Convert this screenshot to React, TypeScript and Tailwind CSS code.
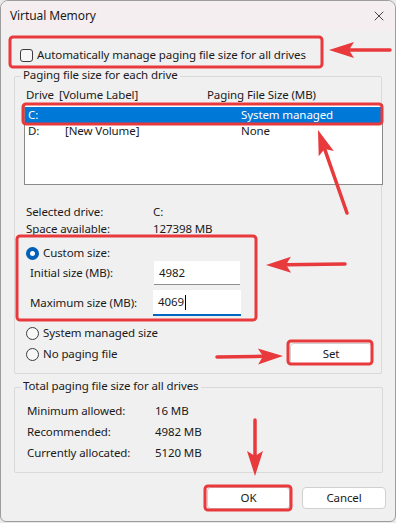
import { X } from 'lucide-react'

const RED = '#e8393c'

function Arrow({ x1, y1, x2, y2 }: { x1: number; y1: number; x2: number; y2: number }) {
  const dx = x2 - x1
  const dy = y2 - y1
  const len = Math.hypot(dx, dy)
  const ux = dx / len
  const uy = dy / len
  const px = -uy
  const py = ux
  const L = 25
  const W = 8
  const notch = 5
  const bx = x2 - ux * L
  const by = y2 - uy * L
  const nx = x2 - ux * (L - notch)
  const ny = y2 - uy * (L - notch)
  const pts = [
    [x2, y2],
    [bx + px * W, by + py * W],
    [nx, ny],
    [bx - px * W, by - py * W],
  ]
    .map((p) => p.join(','))
    .join(' ')
  return (
    <g>
      <line x1={x1} y1={y1} x2={nx} y2={ny} stroke={RED} strokeWidth={3.5} strokeLinecap="round" />
      <polygon points={pts} fill={RED} />
    </g>
  )
}

function Box({ x, y, w, h }: { x: number; y: number; w: number; h: number }) {
  return <rect x={x} y={y} width={w} height={h} rx={3} fill="none" stroke={RED} strokeWidth={3} />
}

function Radio({ checked }: { checked?: boolean }) {
  return checked ? (
    <span className="flex h-[13px] w-[13px] items-center justify-center rounded-full bg-[#005fb8]">
      <span className="h-[5px] w-[5px] rounded-full bg-white" />
    </span>
  ) : (
    <span className="h-[13px] w-[13px] rounded-full border border-[#3c3c3c] bg-[#f7f7f7]" />
  )
}

export default function App() {
  return (
    <div className="relative h-[523px] w-[396px] overflow-hidden bg-[#e9e9e9] font-['Noto_Sans',sans-serif] text-[11.5px] leading-none tracking-[-0.1px] text-[#1a1a1a]">
      {/* Window */}
      <div className="flex h-[522px] w-[396px] flex-col overflow-hidden rounded-t-[8px] rounded-b-[6px] border border-[#9d9d9d] bg-[#f0f0f0]">
        {/* Title bar */}
        <div className="flex h-[30px] items-center justify-between bg-[#f5eef1] pl-[9px] pr-[8px]">
          <span className="text-[12px]">Virtual Memory</span>
          <X size={16} strokeWidth={1.2} className="text-[#1a1a1a]" />
        </div>

        {/* Auto manage */}
        <div className="mt-[16px] flex h-[16px] items-center gap-[4px] pl-[19px]">
          <span className="h-[13px] w-[13px] rounded-[3px] border border-[#3c3c3c] bg-[#f7f7f7]" />
          <span>Automatically manage paging file size for all drives</span>
        </div>

        {/* Paging file size for each drive */}
        <div className="relative ml-[13px] mt-[13px] h-[298px] w-[368px] rounded-[2px] border border-[#d9d9d9]">
          <span className="absolute -top-[8px] left-[6px] bg-[#f0f0f0] px-[2px]">Paging file size for each drive</span>

          <div className="mt-[10px] flex h-[16px] items-center pl-[11px]">
            <span className="w-[33px]">Drive</span>
            <span className="w-[148px]">[Volume Label]</span>
            <span>Paging File Size (MB)</span>
          </div>

          <div className="ml-[9px] mt-[1px] h-[81px] w-[359px] border border-[#8a8a8a] bg-white pt-[2px]">
            <div className="flex h-[16px] items-center bg-[#0078d7] pl-[3px] text-white">
              <span className="w-[213px]">C:</span>
              <span>System managed</span>
            </div>
            <div className="flex h-[16px] items-center pl-[3px]">
              <span className="w-[37px]">D:</span>
              <span className="w-[176px]">[New Volume]</span>
              <span>None</span>
            </div>
          </div>

          <div className="mt-[18px] pl-[11px]">
            <div className="flex h-[17px] items-center">
              <span className="w-[127px]">Selected drive:</span>
              <span>C:</span>
            </div>
            <div className="flex h-[17px] items-center">
              <span className="w-[127px]">Space available:</span>
              <span>127398 MB</span>
            </div>
          </div>

          <div className="mt-[8px] flex h-[16px] items-center gap-[4px] pl-[11px]">
            <Radio checked />
            <span>Custom size:</span>
          </div>

          <div className="flex h-[24px] items-center pl-[15px]">
            <span className="w-[124px]">Initial size (MB):</span>
            <div className="flex h-[24px] w-[86px] items-center border-b border-[#8f8f8f] bg-white pl-[5px]">4982</div>
          </div>

          <div className="mt-[5px] flex h-[26px] items-center pl-[15px]">
            <span className="w-[123px]">Maximum size (MB):</span>
            <div className="flex h-[26px] w-[88px] items-center border-b-2 border-[#0067c0] bg-white pl-[5px]">
              4069
              <span className="ml-[1px] h-[15px] w-[1px] bg-black" />
            </div>
          </div>

          <div className="mt-[9px] flex h-[16px] items-center gap-[4px] pl-[11px]">
            <Radio />
            <span>System managed size</span>
          </div>

          <div className="mt-[2px] flex h-[22px] items-center justify-between pl-[11px] pr-[9px]">
            <div className="flex items-center gap-[4px]">
              <Radio />
              <span>No paging file</span>
            </div>
            <button className="flex h-[22px] w-[82px] items-center justify-center rounded-[4px] border border-[#d0d0d0] bg-white">
              Set
            </button>
          </div>
        </div>

        {/* Total paging file size */}
        <div className="relative ml-[13px] mt-[13px] h-[86px] w-[369px] rounded-[2px] border border-[#d9d9d9]">
          <span className="absolute -top-[8px] left-[6px] bg-[#f0f0f0] px-[2px]">Total paging file size for all drives</span>
          <div className="mt-[12px] pl-[12px]">
            {[
              ['Minimum allowed:', '16 MB'],
              ['Recommended:', '4982 MB'],
              ['Currently allocated:', '5120 MB'],
            ].map(([label, value]) => (
              <div key={label} className="flex h-[21px] items-center">
                <span className="w-[128px]">{label}</span>
                <span>{value}</span>
              </div>
            ))}
          </div>
        </div>

        {/* Buttons */}
        <div className="mt-[14px] flex justify-end gap-[12px] pr-[9px]">
          <button className="flex h-[22px] w-[83px] items-center justify-center rounded-[4px] border border-[#d0d0d0] bg-white">
            OK
          </button>
          <button className="flex h-[22px] w-[84px] items-center justify-center rounded-[4px] border border-[#d0d0d0] bg-white">
            Cancel
          </button>
        </div>
      </div>

      {/* Annotations */}
      <svg className="pointer-events-none absolute inset-0" width={396} height={523}>
        <Box x={10} y={37} w={312} h={30} />
        <Box x={23} y={104} w={359} h={20} />
        <Box x={17} y={236} w={239} h={84} />
        <Box x={288} y={341} w={84} h={23} />
        <Box x={205} y={486} w={86} h={24} />
        <Arrow x1={390} y1={50} x2={329} y2={50} />
        <Arrow x1={347} y1={213} x2={318} y2={130} />
        <Arrow x1={345} y1={264} x2={266} y2={265} />
        <Arrow x1={217} y1={357} x2={283} y2={356} />
        <Arrow x1={255} y1={420} x2={255} y2={476} />
      </svg>
    </div>
  )
}
